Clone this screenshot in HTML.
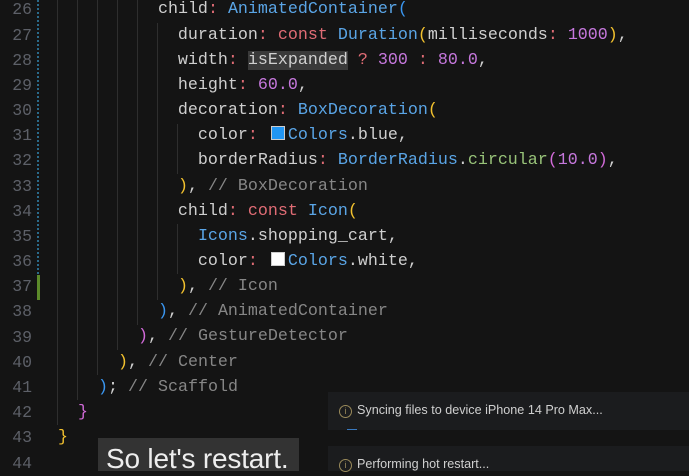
<!DOCTYPE html>
<html><head><meta charset="utf-8"><style>
body{margin:0;width:689px;height:471px;background:#141414;overflow:hidden;position:relative;font-family:"Liberation Mono",monospace}
.ln{position:absolute;left:0;width:32px;text-align:right;color:#5d6068;font-size:16.5px;line-height:25.17px}
.code{position:absolute;left:38px;top:-2.6px;font-size:16.67px;line-height:25.17px;color:#cfcfcf;white-space:normal}
.code div{height:25.17px;white-space:pre}
.g{position:absolute;width:1px;background:#2e2e2e}
.p{color:#cfcfcf}.c{color:#e06c75}.k{color:#e06c75}.t{color:#5aa5e6}.n{color:#c678dd}.y{color:#f2c12e}.m{color:#d16ad8}.b{color:#3a96f0}.cm{color:#868686}.f{color:#98c379}
.sw{display:inline-block;width:12px;height:12px;border:1px solid #ccc;margin:0 3px 0 3px;vertical-align:-1px}
.hl{background:#3a3a3a}
.note{position:absolute;left:328px;width:361px;background:#1b1c1e;font-family:"Liberation Sans",sans-serif;font-size:12.6px;color:#cfcfcf}
.note .i{position:absolute;left:11px;width:11px;height:11px;border:1px solid #9a8a5a;border-radius:50%;font-size:9px;line-height:11px;text-align:center;color:#9a8a5a}
</style></head><body>
<div class="ln" style="top:-2.6px">26<br>27<br>28<br>29<br>30<br>31<br>32<br>33<br>34<br>35<br>36<br>37<br>38<br>39<br>40<br>41<br>42<br>43<br>44</div>
<div style="position:absolute;left:37px;top:0;width:2px;height:275px;background:repeating-linear-gradient(#2a6a8a 0 2px,#141414 2px 4px)"></div>
<div style="position:absolute;left:37px;top:275px;width:3px;height:25px;background:#5c8a2a"></div>
<div class="g" style="left:57px;top:0;height:425px"></div>
<div class="g" style="left:77px;top:0;height:400px"></div>
<div class="g" style="left:97px;top:0;height:375px"></div>
<div class="g" style="left:117px;top:0;height:350px"></div>
<div class="g" style="left:137px;top:0;height:325px"></div>
<div class="g" style="left:157px;top:23px;height:277px"></div>
<div class="g" style="left:177px;top:124px;height:50px"></div>
<div class="g" style="left:177px;top:224px;height:50px"></div>
<div class="code"><div>            <span class="p">child</span><span class="c">:</span> <span class="t">AnimatedContainer</span><span class="b">(</span></div><div>              duration<span class="c">:</span> <span class="k">const</span> <span class="t">Duration</span><span class="y">(</span>milliseconds<span class="c">:</span> <span class="n">1000</span><span class="y">)</span>,</div><div>              width<span class="c">:</span> <span class="hl">isExpanded</span> <span class="k">?</span> <span class="n">300</span> <span class="c">:</span> <span class="n">80.0</span>,</div><div>              height<span class="c">:</span> <span class="n">60.0</span>,</div><div>              decoration<span class="c">:</span> <span class="t">BoxDecoration</span><span class="y">(</span></div><div>                color<span class="c">:</span> <span class="sw" style="background:#2196f3"></span><span class="t">Colors</span>.blue,</div><div>                borderRadius<span class="c">:</span> <span class="t">BorderRadius</span>.<span class="f">circular</span><span class="m">(</span><span class="n">10.0</span><span class="m">)</span>,</div><div>              <span class="y">)</span>, <span class="cm">// BoxDecoration</span></div><div>              child<span class="c">:</span> <span class="k">const</span> <span class="t">Icon</span><span class="y">(</span></div><div>                <span class="t">Icons</span>.shopping_cart,</div><div>                color<span class="c">:</span> <span class="sw" style="background:#fff"></span><span class="t">Colors</span>.white,</div><div>              <span class="y">)</span>, <span class="cm">// Icon</span></div><div>            <span class="b">)</span>, <span class="cm">// AnimatedContainer</span></div><div>          <span class="m">)</span>, <span class="cm">// GestureDetector</span></div><div>        <span class="y">)</span>, <span class="cm">// Center</span></div><div>      <span class="b">)</span>; <span class="cm">// Scaffold</span></div><div>    <span class="m">}</span></div><div>  <span class="y">}</span></div></div>
<div class="note" style="top:392px;height:38px"><span class="i" style="top:13px">i</span><span style="position:absolute;left:29px;top:11px">Syncing files to device iPhone 14 Pro Max...</span><div style="position:absolute;left:19px;top:37px;width:10px;height:1px;background:#3a7ac0"></div></div>
<div class="note" style="top:446px;height:25px"><span class="i" style="top:13px">i</span><span style="position:absolute;left:29px;top:11px">Performing hot restart...</span></div>
<div style="position:absolute;left:98px;top:438px;width:201px;height:33px;background:#333;color:#eee;font-family:'Liberation Sans',sans-serif;font-size:28px;line-height:42px;padding-left:8px;box-sizing:border-box;letter-spacing:-0.2px;white-space:nowrap;overflow:hidden">So let's restart.</div>
</body></html>
